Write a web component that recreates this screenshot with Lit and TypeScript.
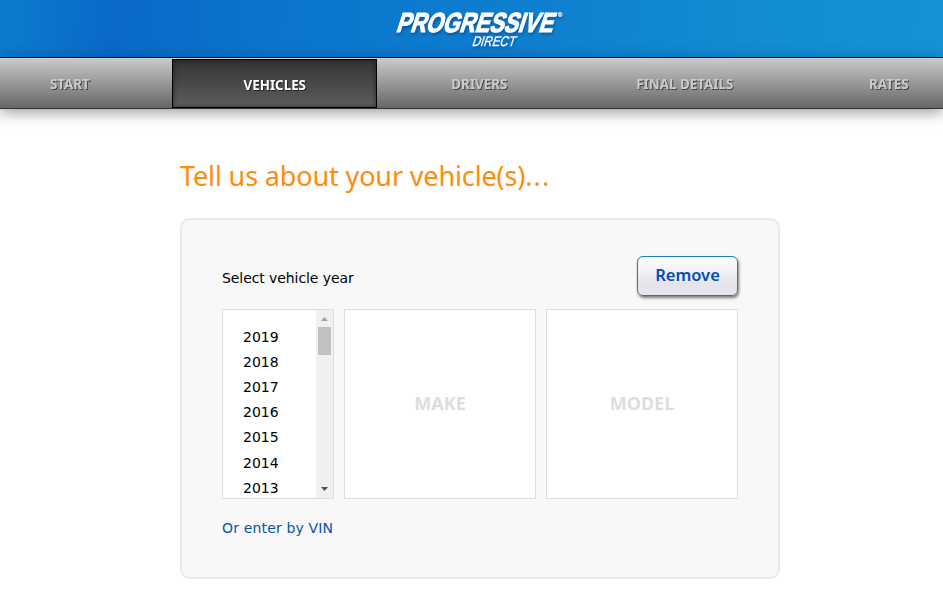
import { LitElement, html, css } from "lit";
import { customElement, property } from "lit/decorators.js";
import { classMap } from "lit/directives/class-map.js";

@customElement("brand-header")
class BrandHeader extends LitElement {
  static styles = css`
    :host {
      display: flex;
      justify-content: center;
      box-sizing: border-box;
      height: 58px;
      border-bottom: 1px solid #00107a;
      background: linear-gradient(94deg, #0b7ccc 0%, #0969c8 12%, #0a75cb 30%, #0e7ecf 55%, #128bd2 78%, #1492d5 100%);
    }
    svg {
      display: block;
      width: 240px;
      height: 57px;
      flex: none;
      overflow: visible;
      filter: drop-shadow(1px 2px 1.5px rgba(0, 35, 100, 0.4));
    }
    text {
      fill: #fff;
      stroke: #fff;
      font-family: "Liberation Sans", Arial, sans-serif;
    }
    .name {
      font-size: 27.5px;
      font-weight: 700;
      stroke-width: 1.2px;
    }
    .division {
      font-size: 14px;
      stroke-width: 0.3px;
    }
    .mark {
      font-size: 6px;
      stroke-width: 0.2px;
    }
  `;

  render() {
    return html`
      <svg viewBox="0 0 240 57" role="img" aria-label="Progressive Direct">
        <text class="name" transform="translate(43.5 32) skewX(-18)" textLength="156.5" lengthAdjust="spacingAndGlyphs">PROGRESSIVE</text>
        <text class="division" transform="translate(119.5 46) skewX(-18)" textLength="43" lengthAdjust="spacingAndGlyphs">DIRECT</text>
        <text class="mark" x="206" y="17">®</text>
      </svg>
    `;
  }
}

@customElement("step-nav")
class StepNav extends LitElement {
  @property({ type: Array }) steps: string[] = [];
  @property() current = "";

  static styles = css`
    :host {
      display: flex;
      justify-content: flex-start;
      box-sizing: border-box;
      height: 51px;
      border-bottom: 1px solid #333;
      background: linear-gradient(#cbcbcb, #666);
      box-shadow: 0 3px 14px rgba(0, 0, 0, 0.42);
      font: 700 14px/50px "Noto Sans", sans-serif;
    }
    nav {
      display: grid;
      grid-template-columns: 204px 205px 205px 205px 204px;
      margin-left: -32px;
      flex: none;
    }
    a {
      height: 50px;
      text-align: center;
      color: #ccc;
      text-shadow: 1px 1px 0 #444;
      padding-top: 1px;
      box-sizing: border-box;
    }
    span {
      display: inline-block;
      transform: scaleX(0.955);
    }
    .current {
      margin-top: 1px;
      height: 49px;
      border: 1px solid #000;
      padding: 0;
      color: #fff;
      text-shadow: 1px 1px 0 #222;
      background: linear-gradient(#333, #5e5e5e);
      box-shadow: inset 0 0 5px rgba(0, 0, 0, 0.5);
    }
  `;

  render() {
    return html`<nav>
      ${this.steps.map(
        (s) => html`<a class=${classMap({ current: s === this.current })}><span>${s}</span></a>`
      )}
    </nav>`;
  }
}

@customElement("year-list")
class YearList extends LitElement {
  @property({ type: Array }) years: number[] = [];

  static styles = css`
    :host {
      display: flex;
      box-sizing: border-box;
      width: 112px;
      height: 190px;
      border: 1px solid #ddd;
      background: #fff;
      overflow: hidden;
    }
    .years {
      flex: 1;
      padding: 14.6px 0 0 20px;
      color: #000;
      font: 14px/25.2px "DejaVu Sans", Verdana, sans-serif;
    }
    .bar {
      width: 17px;
      background: #f0f0f0;
      display: flex;
      flex-direction: column;
      align-items: center;
    }
    .thumb {
      width: 13px;
      height: 28px;
      background: #c1c1c1;
    }
    .arrow {
      display: block;
      width: 17px;
      height: 17px;
    }
    .up {
      fill: #a3a3a3;
    }
    .down {
      fill: #505050;
      margin-top: auto;
    }
  `;

  render() {
    return html`
      <div class="years">${this.years.map((y) => html`<div>${y}</div>`)}</div>
      <div class="bar">
        <svg class="arrow up" viewBox="0 0 17 17"><path d="M5 11L8.5 7L12 11Z" /></svg>
        <div class="thumb"></div>
        <svg class="arrow down" viewBox="0 0 17 17"><path d="M5 6H12L8.5 10Z" /></svg>
      </div>
    `;
  }
}

@customElement("app-root")
class AppRoot extends LitElement {
  static styles = css`
    :host {
      display: block;
      height: 606px;
      overflow: hidden;
      background: #fff;
      font: 14px/20px "DejaVu Sans", Verdana, sans-serif;
    }
    main {
      width: 600px;
      margin-left: 180px;
    }
    h1 {
      margin: 0;
      padding-top: 47px;
      height: 62px;
      font: 400 27px/40px "Noto Sans", sans-serif;
      letter-spacing: -0.14px;
      color: #ff8b0a;
      white-space: nowrap;
    }
    .dots {
      letter-spacing: 1.1px;
    }
    .panel {
      box-sizing: border-box;
      height: 361px;
      padding: 36px 40px 0;
      border: 2px solid #e9e9e9;
      border-radius: 10px;
      background: #f8f8f8;
    }
    .top {
      display: flex;
      justify-content: space-between;
      height: 53px;
    }
    .label {
      padding-top: 12px;
      color: #000;
      letter-spacing: -0.08px;
    }
    button {
      box-sizing: border-box;
      width: 101px;
      height: 40px;
      margin: 0;
      padding: 0 0 2px;
      border: 1px solid #1680bd;
      border-radius: 6px;
      background: linear-gradient(#fff, #e6e4eb 70%, #e8e6ed);
      box-shadow: 1px 2px 3px rgba(0, 0, 0, 0.5);
      color: #004db3;
      font: 600 16.5px/36px "Noto Sans", sans-serif;
    }
    .choices {
      display: grid;
      grid-template-columns: 112px 192px 192px;
      gap: 10px;
    }
    .slot {
      display: grid;
      place-items: center;
      box-sizing: border-box;
      height: 190px;
      padding-bottom: 2px;
      border: 1px solid #ddd;
      background: #fff;
      color: #ddd;
      font: 700 18px/24px "Noto Sans", sans-serif;
    }
    .vin {
      display: block;
      margin-top: 19px;
      color: #0a51ab;
      letter-spacing: 0.16px;
    }
  `;

  render() {
    return html`
      <brand-header></brand-header>
      <step-nav
        .steps=${["START", "VEHICLES", "DRIVERS", "FINAL DETAILS", "RATES"]}
        current="VEHICLES"
      ></step-nav>
      <main>
        <h1>Tell us about your vehicle(s)<span class="dots">...</span></h1>
        <section class="panel">
          <div class="top">
            <span class="label">Select vehicle year</span>
            <button>Remove</button>
          </div>
          <div class="choices">
            <year-list .years=${[2019, 2018, 2017, 2016, 2015, 2014, 2013]}></year-list>
            <div class="slot"><span>MAKE</span></div>
            <div class="slot"><span>MODEL</span></div>
          </div>
          <a class="vin">Or enter by VIN</a>
        </section>
      </main>
    `;
  }
}
